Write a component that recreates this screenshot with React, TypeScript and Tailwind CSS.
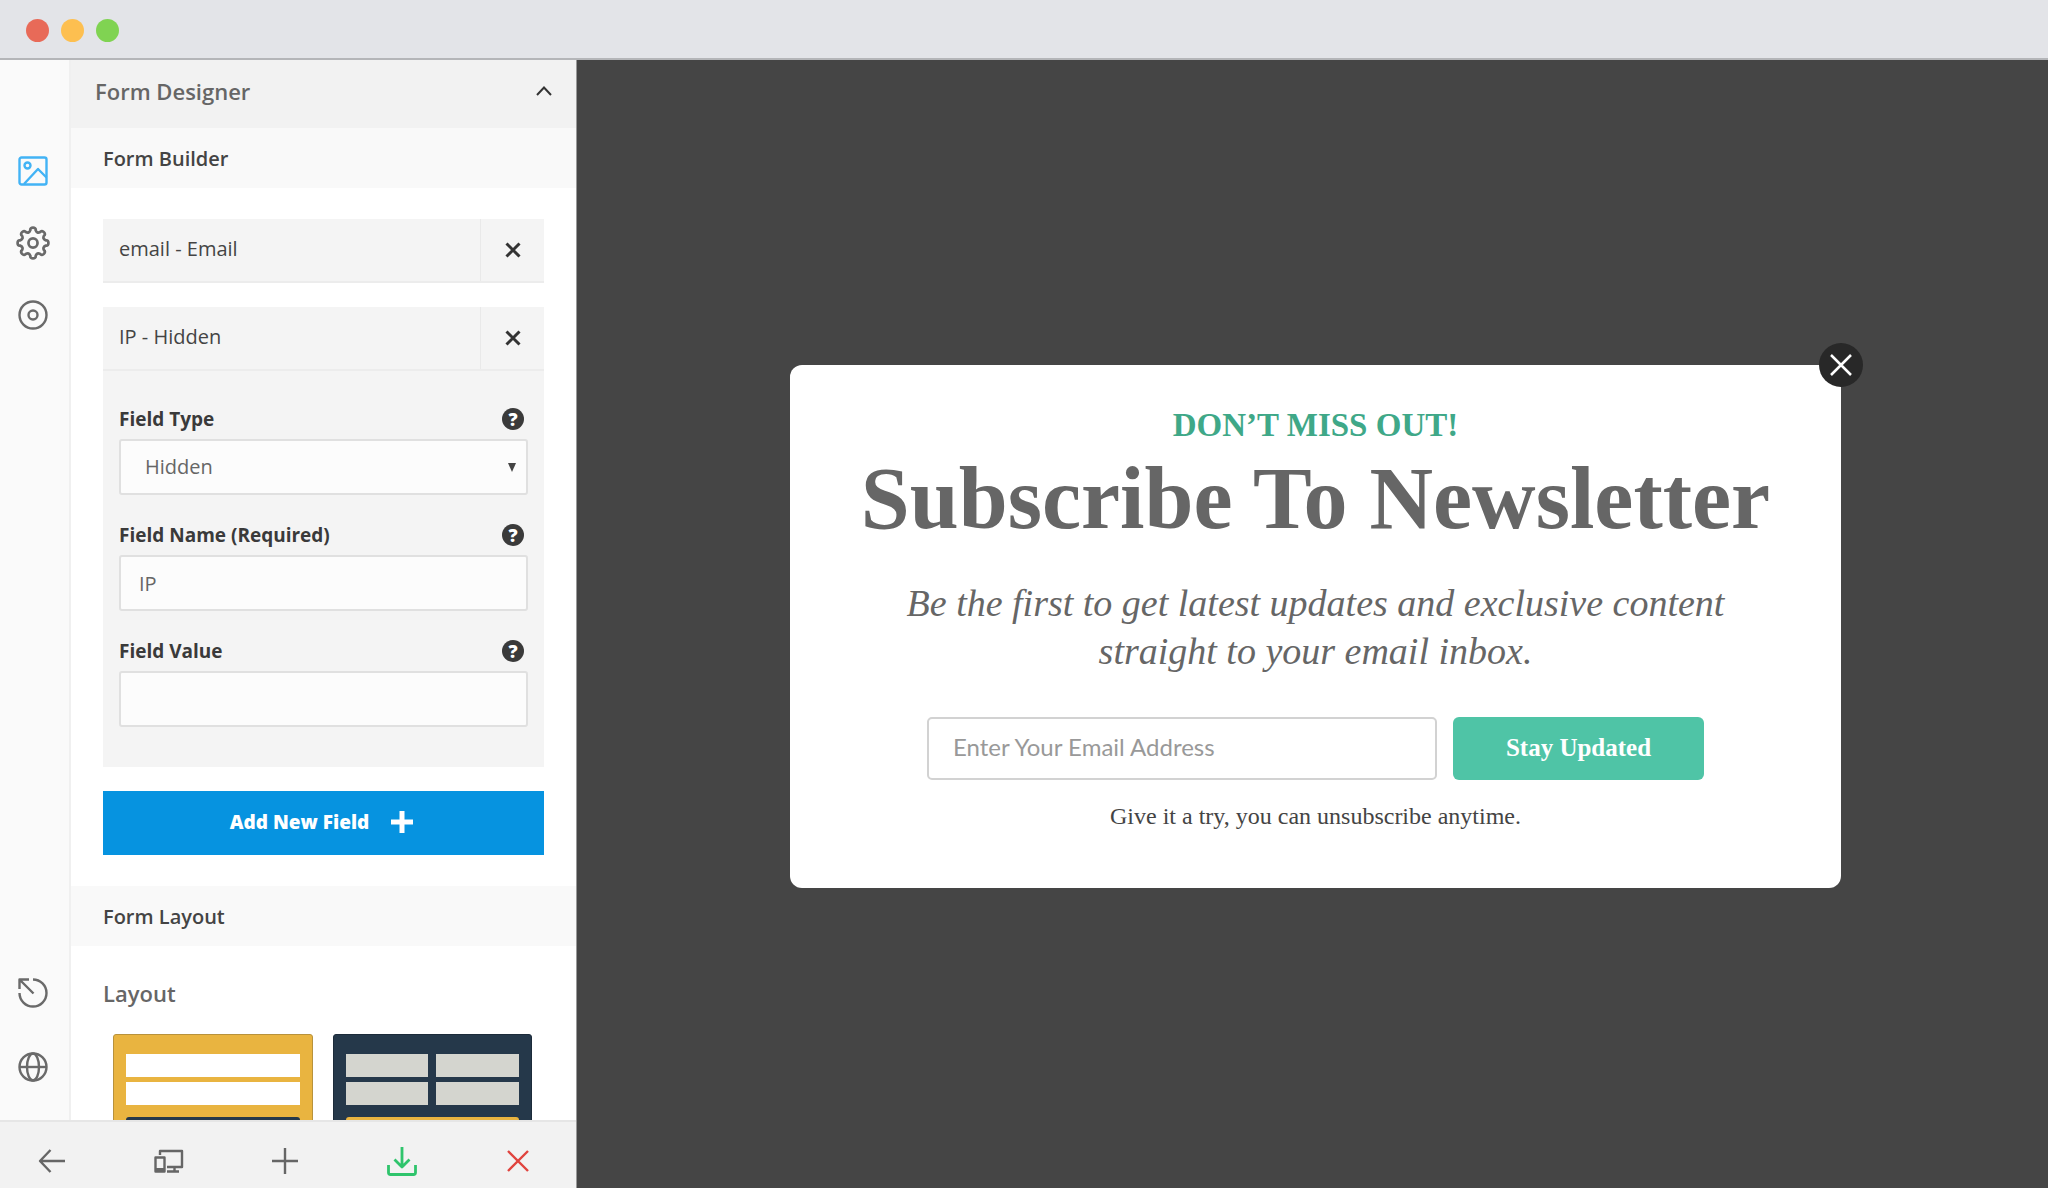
import type { ReactNode } from 'react';

function Icon({ size = 30, children }: { size?: number; children: ReactNode }) {
  return (
    <svg
      width={size}
      height={size}
      viewBox="0 0 30 30"
      fill="none"
      stroke="currentColor"
      strokeWidth="2.4"
      strokeLinejoin="round"
      aria-hidden="true"
    >
      {children}
    </svg>
  );
}

// Eight rounded teeth around the hub
function gearPath() {
  const pts: string[] = [];
  for (let i = 0; i < 8; i++) {
    const a = (i * Math.PI) / 4 - Math.PI / 2;
    const at = (r: number, d: number) =>
      `${(15 + r * Math.cos(a + d)).toFixed(2)} ${(15 + r * Math.sin(a + d)).toFixed(2)}`;
    pts.push(`${i === 0 ? 'M' : 'L'}${at(11.6, -0.2)}`);
    pts.push(`C${at(14.7, -0.22)} ${at(14.7, 0.22)} ${at(11.6, 0.2)}`);
    pts.push(`Q${at(8.9, 0.393)} ${at(11.6, 0.585)}`);
  }
  return pts.join(' ') + 'Z';
}

function CrossIcon() {
  return (
    <svg width="16" height="16" viewBox="0 0 16 16" stroke="currentColor" strokeWidth="3" aria-hidden="true">
      <path d="M1.5 1.5l13 13M14.5 1.5l-13 13" />
    </svg>
  );
}

function FieldRow({ title }: { title: string }) {
  return (
    <div className="flex h-16 border-b-2 border-[#ececec] bg-[#f4f4f4]">
      <div className="flex flex-1 items-center px-4 pb-0.5 text-[20px] text-[#444]">{title}</div>
      <button
        type="button"
        aria-label={`Remove ${title}`}
        className="flex w-16 items-center justify-center border-l border-[#e9e9e9] text-[#333]"
      >
        <CrossIcon />
      </button>
    </div>
  );
}

function FieldLabel({ id, children }: { id: string; children: ReactNode }) {
  return (
    <div className="flex h-10 items-center justify-between pr-1">
      <label htmlFor={id} className="text-[19px] font-bold text-[#3a3a3a]">
        {children}
      </label>
      <button
        type="button"
        aria-label="Help"
        className="flex size-[22px] items-center justify-center rounded-full bg-[#3a3a3a] text-[18px] leading-none font-extrabold text-white"
      >
        ?
      </button>
    </div>
  );
}

const inputClass =
  'block h-14 w-full rounded-[3px] border-2 border-[#e0e0e0] bg-[#fcfcfc] text-[20px] text-[#666] outline-none';

function SectionTitle({ children }: { children: ReactNode }) {
  return (
    <h3 className="flex h-15 shrink-0 items-center bg-[#f9f9f9] px-8 pt-0.5 text-[20px] font-semibold text-[#444]">
      {children}
    </h3>
  );
}

function SideNav() {
  return (
    <nav className="flex w-[71px] shrink-0 flex-col items-center border-r-2 border-[#f0f0f0] bg-[#fafafa] pt-24 pr-1 pb-[38px] text-[#6a6a6a]">
      <div className="flex flex-col items-center gap-10">
        <button type="button" aria-label="Design" className="text-[#42b3f5]">
          <Icon>
            <rect x="1.5" y="1.5" width="27" height="27" rx="2" />
            <circle cx="9.5" cy="9.5" r="3" />
            <path d="M6 28L20 13l8.5 8.5" />
          </Icon>
        </button>
        <button type="button" aria-label="Settings">
          <Icon size={34}>
            <path d={gearPath()} />
            <circle cx="15" cy="15" r="4" />
          </Icon>
        </button>
        <button type="button" aria-label="Target">
          <Icon>
            <circle cx="15" cy="15" r="13.5" />
            <circle cx="15" cy="15" r="4.5" />
          </Icon>
        </button>
      </div>
      <div className="mt-auto flex flex-col gap-11">
        <button type="button" aria-label="Reset">
          <Icon>
            <path d="M15 1.5A13.5 13.5 0 1 1 1.5 15" />
            <path d="M1.5 11V1.5H11M2 2l13.5 13.5" />
          </Icon>
        </button>
        <button type="button" aria-label="Language">
          <Icon>
            <circle cx="15" cy="15" r="13.5" />
            <ellipse cx="15" cy="15" rx="6" ry="13.5" />
            <path d="M1.5 15h27" />
          </Icon>
        </button>
      </div>
    </nav>
  );
}

function BottomBar() {
  return (
    <div className="flex h-17 shrink-0 items-center justify-between border-t-2 border-[#e6e6e6] bg-[#f2f2f2] pt-3 pr-[43px] pl-[37px] text-[#666]">
      <button type="button" aria-label="Back">
        <Icon>
          <path d="M28 15H3M13.5 4L3 15l10.5 11" />
        </Icon>
      </button>
      <button type="button" aria-label="Devices">
        <Icon>
          <path d="M6 9V5h22v16H13" />
          <path d="M20.5 21v4M13 25.5h12M1.5 11.5h9v14h-9z" />
          <path d="M2 23.5h8" strokeWidth="3" />
        </Icon>
      </button>
      <button type="button" aria-label="Add">
        <Icon>
          <path d="M15 2v26M2 15h26" />
        </Icon>
      </button>
      <button type="button" aria-label="Save" className="text-[#2fc46c]">
        <Icon>
          <path
            d="M15 1v20M7.5 13.5L15 21l7.5-7.5M1.5 19v7.5a2 2 0 0 0 2 2h23a2 2 0 0 0 2-2V19"
            strokeWidth="2.8"
          />
        </Icon>
      </button>
      <button type="button" aria-label="Discard" className="text-[#e0443e]">
        <Icon>
          <path d="M5 5l20 20M25 5L5 25" />
        </Icon>
      </button>
    </div>
  );
}

function FormDesigner() {
  return (
    <section className="flex min-w-0 flex-1 flex-col overflow-hidden bg-white">
      <h2 className="flex h-17 shrink-0 items-center justify-between bg-[#f2f2f2] px-6 pb-1.5 text-[22px] font-semibold text-[#666]">
        Form Designer
        <button type="button" aria-label="Collapse" className="text-[#333]">
          <svg width="16" height="10" viewBox="0 0 16 10" fill="none" stroke="currentColor" strokeWidth="2" aria-hidden="true">
            <path d="M1 9l7-7.5L15 9" />
          </svg>
        </button>
      </h2>
      <SectionTitle>Form Builder</SectionTitle>

      <div className="px-8 py-[31px]">
        <FieldRow title="email - Email" />
        <div className="mt-6 bg-[#f4f4f4]">
          <FieldRow title="IP - Hidden" />
          <div className="flex flex-col gap-5 px-4 pt-7 pb-10">
            <div>
              <FieldLabel id="field-type">Field Type</FieldLabel>
              <div className="relative">
                <select id="field-type" className={`${inputClass} appearance-none px-6`}>
                  <option>Hidden</option>
                </select>
                <svg className="pointer-events-none absolute top-6 right-3" width="8" height="9" viewBox="0 0 8 9" aria-hidden="true">
                  <path d="M0 0h8L4 9z" fill="#444" />
                </svg>
              </div>
            </div>
            <div>
              <FieldLabel id="field-name">Field Name (Required)</FieldLabel>
              <input id="field-name" type="text" defaultValue="IP" className={`${inputClass} px-[18px]`} />
            </div>
            <div>
              <FieldLabel id="field-value">Field Value</FieldLabel>
              <input id="field-value" type="text" className={`${inputClass} px-[18px]`} />
            </div>
          </div>
        </div>
        <button
          type="button"
          className="mt-6 flex h-16 w-full items-center justify-center gap-[22px] bg-[#0693e0] pr-1 pb-0.5 text-[19px] font-extrabold text-white"
        >
          Add New Field
          <svg width="22" height="22" viewBox="0 0 22 22" stroke="currentColor" strokeWidth="5" aria-hidden="true">
            <path d="M11 0v22M0 11h22" />
          </svg>
        </button>
      </div>

      <SectionTitle>Form Layout</SectionTitle>
      <div className="px-8 pt-[31px]">
        <h4 className="text-[22px] leading-8 font-semibold text-[#666]">Layout</h4>
        <div className="mt-[25px] grid grid-cols-2 gap-5 pr-3 pl-[10px]">
          <button type="button" aria-label="Stacked fields" className="flex flex-col gap-[5px] rounded-[3px] border border-[#b8923c] bg-[#e9b440] px-3 pt-[19px] pb-5">
            <span className="h-[23px] w-full bg-white" />
            <span className="h-[23px] w-full bg-white" />
            <span className="mt-[7px] h-8 w-full rounded-[3px] bg-[#25384a]" />
          </button>
          <button type="button" aria-label="Fields in two columns" className="grid grid-cols-2 content-start gap-x-2 gap-y-[5px] rounded-[3px] border border-[#1c2b3a] bg-[#25384a] px-3 pt-[19px] pb-5">
            <span className="h-[23px] bg-[#d4d5cf]" />
            <span className="h-[23px] bg-[#d4d5cf]" />
            <span className="h-[23px] bg-[#d4d5cf]" />
            <span className="h-[23px] bg-[#d4d5cf]" />
            <span className="col-span-2 mt-[7px] h-8 rounded-[3px] bg-[#e9b440]" />
          </button>
        </div>
      </div>
    </section>
  );
}

const serif = "font-['Palatino_Linotype','Palatino','Liberation_Serif',serif]";

function NewsletterPopup() {
  return (
    <div className={`relative w-full max-w-[1051px] rounded-xl bg-white px-10 pt-10 pb-14 text-center text-[#666] ${serif}`}>
      <button
        type="button"
        aria-label="Close"
        className="absolute -top-[22px] -right-[22px] flex size-11 items-center justify-center rounded-full bg-[#282828] text-white"
      >
        <svg width="22" height="22" viewBox="0 0 22 22" stroke="currentColor" strokeWidth="2.5" aria-hidden="true">
          <path d="M1 1l20 20M21 1L1 21" />
        </svg>
      </button>
      <p className="text-[33px] leading-10 font-bold text-[#3fa888]">DON’T MISS OUT!</p>
      <h1 className="mt-1.5 text-[88px] leading-24 font-bold whitespace-nowrap">Subscribe To Newsletter</h1>
      <p className="mt-8 text-[38px] leading-12 italic">
        Be the first to get latest updates and exclusive content
        <br />
        straight to your email inbox.
      </p>
      <form className="mx-auto mt-[42px] flex max-w-[777px] gap-4">
        <input
          type="email"
          aria-label="Email address"
          placeholder="Enter Your Email Address"
          className="h-[63px] min-w-0 flex-1 rounded-[5px] border-2 border-[#d2d2d2] px-6 pb-1 font-['Lato',sans-serif] text-[24px] outline-none placeholder:text-[#999]"
        />
        <button type="button" className="h-[63px] w-[251px] rounded-md bg-[#4fc4a6] text-[25px] font-bold text-white">
          Stay Updated
        </button>
      </form>
      <p className="mt-5 text-[24px] leading-8 text-[#444]">Give it a try, you can unsubscribe anytime.</p>
    </div>
  );
}

export default function App() {
  return (
    <div className="flex h-screen flex-col overflow-hidden font-['Open_Sans','Noto_Sans',sans-serif]">
      <header className="flex h-15 shrink-0 items-center gap-3 border-b-2 border-[#b4b5b8] bg-[#e3e4e8] px-[26px] pt-0.5">
        <span className="size-[23px] rounded-full bg-[#e86a58]" />
        <span className="size-[23px] rounded-full bg-[#fdbf50]" />
        <span className="size-[23px] rounded-full bg-[#80d352]" />
      </header>
      <div className="flex min-h-0 flex-1">
        <aside className="flex w-[577px] shrink-0 flex-col border-r border-[#999]">
          <div className="flex min-h-0 flex-1">
            <SideNav />
            <FormDesigner />
          </div>
          <BottomBar />
        </aside>
        <main className="flex flex-1 items-center justify-center bg-[#454545] pt-1 pr-8 pl-[38px]">
          <NewsletterPopup />
        </main>
      </div>
    </div>
  );
}
